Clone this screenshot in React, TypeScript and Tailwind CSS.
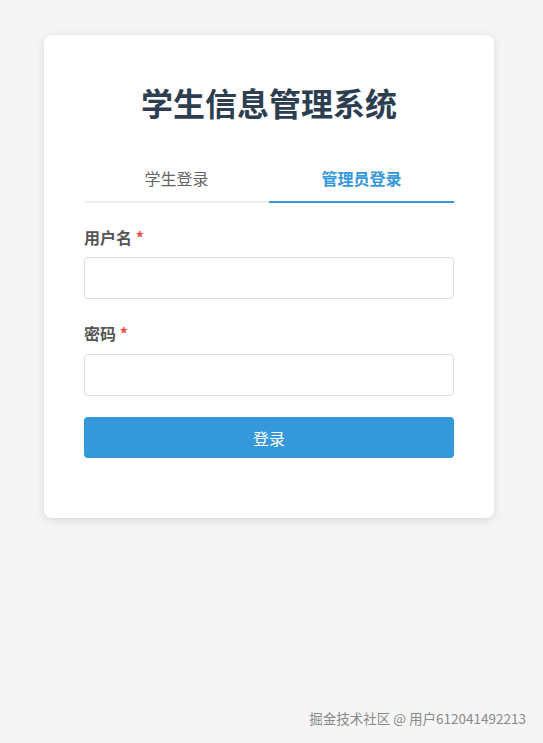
import React from "react";

export default function App() {
  const font = { fontFamily: '"Noto Sans CJK SC", "Noto Sans", sans-serif' };
  return (
    <div className="relative min-h-[743px] bg-[#f5f5f5] pt-[35px]" style={font}>
      <div className="ml-[44px] w-[450px] rounded-lg bg-white px-10 pt-[43px] pb-[60px] shadow-[0_2px_10px_rgba(0,0,0,0.12)]">
        <h1 className="text-center text-[32px] font-bold leading-[48px] text-[#2c3e50]">学生信息管理系统</h1>
        <div className="mt-[29px] flex">
          <div className="flex h-[48px] flex-1 items-center justify-center border-b-2 border-[#eeeeee] text-[16px] text-[#666666]">学生登录</div>
          <div className="flex h-[48px] flex-1 items-center justify-center border-b-2 border-[#3498db] text-[16px] font-bold text-[#3498db]">管理员登录</div>
        </div>
        <div className="mt-[22px]">
          <div className="text-[16px] font-bold leading-[24px] text-[#555555]">
            用户名 <span className="text-[#e74c3c]">*</span>
          </div>
          <input className="mt-2 block h-[42px] w-full rounded border border-[#dddddd] bg-white px-3 outline-none" />
        </div>
        <div className="mt-[22px]">
          <div className="text-[16px] font-bold leading-[24px] text-[#555555]">
            密码 <span className="text-[#e74c3c]">*</span>
          </div>
          <input type="password" className="mt-[9px] block h-[42px] w-full rounded border border-[#dddddd] bg-white px-3 outline-none" />
        </div>
        <button className="mt-[21px] block h-[41px] w-full rounded bg-[#3498db] text-[16px] text-white">登录</button>
      </div>
      <div className="absolute right-[17px] bottom-[16px] text-[13.5px] leading-[18px] text-[#8a8a8a]">掘金技术社区 @ 用户612041492213</div>
    </div>
  );
}
